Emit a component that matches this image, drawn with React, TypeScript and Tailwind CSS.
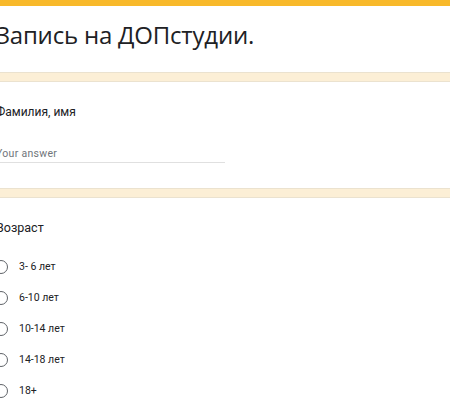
import React from "react";

const ages = ["3- 6 лет", "6-10 лет", "10-14 лет", "14-18 лет", "18+"];

function Band() {
  return <div className="h-[10px] bg-[#fcefd6] border-y border-[#ebe2cf]" />;
}

export default function App() {
  return (
    <div className="w-[450px] h-[420px] overflow-hidden bg-white text-[#202124] font-['Roboto',_'Noto_Sans',_sans-serif]">
      <div className="h-[6px] bg-[#f8b92a]" />
      {/* заголовок формы */}
      <div className="h-[66px] pt-[13px] -ml-[4px]">
        <h1 className="text-[24px] leading-[32px] font-['Open_Sans',_'Roboto',_sans-serif] tracking-[-0.2px]">
          Запись на ДОПстудии.
        </h1>
      </div>
      <Band />
      {/* вопрос: Фамилия, имя */}
      <div className="h-[106px] pt-[22px] -ml-[4px]">
        <div className="text-[12px] leading-[16px]">Фамилия, имя</div>
        <div className="mt-[27px] w-[229px] h-[16px] border-b border-[#e0e0e0] text-[10.5px] leading-[14px] text-[#70757a] tracking-[0.3px]">
          Your answer
        </div>
      </div>
      <Band />
      {/* вопрос: Возраст */}
      <div className="pt-[22px] -ml-[4px]">
        <div className="text-[12.5px] leading-[16px]">Возраст</div>
        <div className="mt-[15px] flex flex-col">
          {ages.map((a) => (
            <label key={a} className="h-[31px] flex items-center -ml-[2px]">
              <span className="w-[14px] h-[14px] rounded-full border-[1.5px] border-[#5f6368]" />
              <span className="ml-[11px] text-[10.5px] leading-[14px]">{a}</span>
            </label>
          ))}
        </div>
      </div>
    </div>
  );
}
